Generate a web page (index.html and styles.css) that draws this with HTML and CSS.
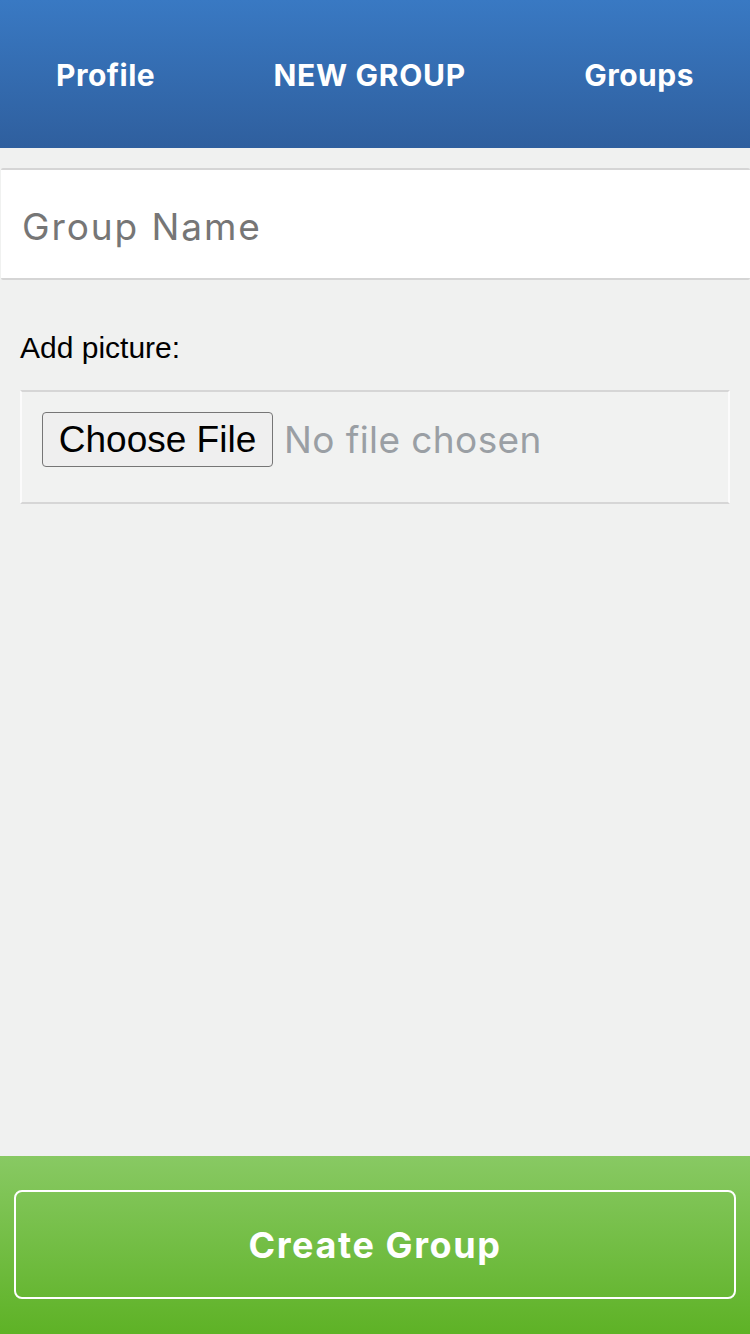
FILE: index.html
```html
<!DOCTYPE html>
<html lang="en">
<head>
<meta charset="utf-8">
<title>New Group</title>
<link rel="stylesheet" href="styles.css">
</head>
<body>
<header class="topbar">
  <nav class="nav">
    <a class="nav-link" href="#">Profile</a>
    <span class="nav-title">NEW GROUP</span>
    <a class="nav-link" href="#">Groups</a>
  </nav>
</header>
<main class="content">
  <input class="group-name" type="text" placeholder="Group Name">
  <label class="field-label">Add picture:</label>
  <div class="file-box">
    <span class="file-button">Choose File</span>
    <span class="file-status">No file chosen</span>
  </div>
</main>
<footer class="bottombar">
  <button class="create-btn" type="button">Create Group</button>
</footer>
</body>
</html>
```

FILE: styles.css
```css
html, body {
  margin: 0;
  padding: 0;
}

body {
  width: 750px;
  height: 1334px;
  display: flex;
  flex-direction: column;
  background: #f0f1f0;
  font-family: Inter, "Open Sans", sans-serif;
  overflow: hidden;
}

.topbar {
  height: 148px;
  flex: none;
  background: linear-gradient(to bottom, #3979c3, #2f5f9e);
}

.nav {
  height: 100%;
  display: flex;
  align-items: center;
  justify-content: space-between;
  padding: 2px 56px 0 56px;
  box-sizing: border-box;
}

.nav-link,
.nav-title {
  color: #ffffff;
  font-family: Inter, sans-serif;
  font-weight: 700;
  font-size: 30px;
  text-decoration: none;
  letter-spacing: 0.5px;
}

.nav-title {
  letter-spacing: 0.7px;
}

.content {
  flex: 1;
  display: flex;
  flex-direction: column;
  padding-top: 20px;
}

.group-name {
  box-sizing: border-box;
  display: block;
  width: 749px;
  height: 112px;
  margin: 0 0 0 1px;
  padding: 4px 0 0 21px;
  border: none;
  border-top: 2px solid #d5d5d5;
  border-bottom: 2px solid #d5d5d5;
  border-radius: 2px;
  background: #ffffff;
  font-family: Inter, sans-serif;
  font-size: 37px;
  letter-spacing: 1.9px;
  color: #333;
  outline: none;
}

.group-name::placeholder {
  color: #767676;
}

.field-label {
  display: block;
  margin: 51px 0 0 20px;
  font-family: "Liberation Sans", Arial, sans-serif;
  font-size: 30px;
  line-height: 34px;
  color: #000000;
}

.file-box {
  box-sizing: border-box;
  width: 710px;
  margin: 25px 0 0 20px;
  padding: 20px 20px 35px 20px;
  display: flex;
  align-items: center;
  background: #f1f2f1;
  border-top: 2px solid #d6d6d6;
  border-bottom: 2px solid #d6d6d6;
  border-left: 2px solid #fbfbfb;
  border-right: 2px solid #fbfbfb;
}

.file-button {
  box-sizing: border-box;
  width: 231px;
  height: 55px;
  display: flex;
  align-items: center;
  justify-content: center;
  background: #efefef;
  border: 1px solid #767676;
  border-radius: 4px;
  font-family: "Liberation Sans", Arial, sans-serif;
  font-size: 37px;
  color: #000000;
}

.file-status {
  margin-left: 11px;
  font-family: Inter, sans-serif;
  font-size: 37px;
  color: #9a9fa4;
  letter-spacing: 0.4px;
}

.bottombar {
  flex: none;
  height: 178px;
  box-sizing: border-box;
  padding: 34px 14px 35px 14px;
  background: linear-gradient(to bottom, #88c963, #5eb226);
}

.create-btn {
  display: block;
  width: 100%;
  height: 109px;
  background: transparent;
  border: 2px solid #ffffff;
  border-radius: 8px;
  color: #ffffff;
  font-family: Inter, sans-serif;
  font-weight: 700;
  font-size: 36px;
  letter-spacing: 1.6px;
  cursor: pointer;
}
```
